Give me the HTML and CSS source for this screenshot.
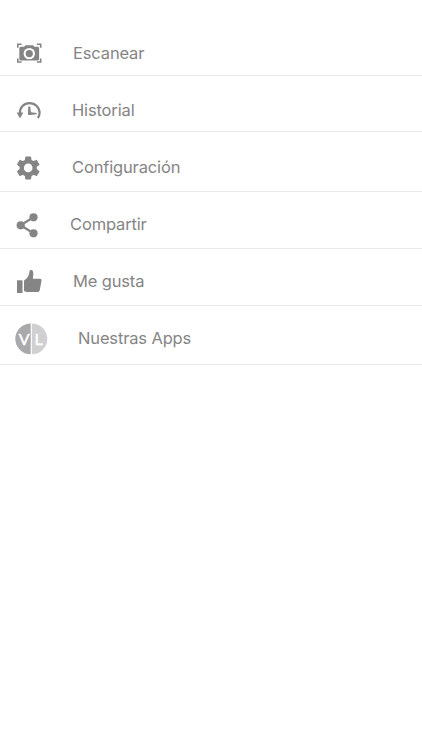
FILE: index.html
```html
<!DOCTYPE html>
<html lang="es">
<head>
    <meta charset="UTF-8">
    <meta name="viewport" content="width=device-width, initial-scale=1.0">
    <title>Menú</title>
    <link rel="stylesheet" href="styles.css">
</head>
<body>
    <ul class="menu">
        <li class="item scan">
            <svg class="icon" viewBox="0 0 36 36">
                <path class="line frame" d="M5.800 11.800V8.300h3.800M24.900 8.300h3.800V11.800M5.800 22.500v3.500h3.800M24.900 26h3.800V22.500"/>
                <path fill-rule="evenodd" d="M9 10.700h3.200l1.300-1.500h7.600l1.300 1.500h3.200q1.500 0 1.500 1.500v10.800q0 1.500-1.500 1.500H9q-1.700 0-1.700-1.500V12.200q0-1.500 1.700-1.500zM17.300 11.900a5.700 5.700 0 1 0 0 11.400 5.700 5.700 0 1 0 0-11.400zm0 2.100a3.600 3.600 0 1 1 0 7.200 3.600 3.600 0 1 1 0-7.200z"/>
            </svg>
            <span class="label">Escanear</span>
        </li>
        <li class="item history">
            <svg class="icon" viewBox="0 0 36 36">
                <path class="line" d="M7.800 21C7.600 14.300 12 10.200 17.600 10.200c5.700 0 10 4.300 10 9.600 0 2-.6 3.800-1.700 5.200"/>
                <path d="M16.200 13.500h1.900l.9 5.700 5.700.8v1.200l-6.500.8h-2.200z"/>
                <path d="M4.700 19.500h6.600L8 25.500z"/>
            </svg>
            <span class="label">Historial</span>
        </li>
        <li class="item settings">
            <svg class="icon" viewBox="0 0 36 36">
                <path transform="translate(1.800 3.500) scale(1.2)" d="M19.140 12.940c.04-.3.06-.61.06-.94 0-.32-.02-.64-.07-.94l2.030-1.580c.18-.14.23-.41.12-.61l-1.920-3.320c-.12-.22-.37-.29-.59-.22l-2.390.96c-.5-.38-1.030-.7-1.620-.94l-.36-2.540c-.04-.24-.24-.41-.48-.41h-3.840c-.24 0-.43.17-.47.41l-.36 2.540c-.59.24-1.130.57-1.620.94l-2.390-.96c-.22-.08-.47 0-.59.22L2.740 8.870c-.12.21-.08.47.12.61l2.030 1.580c-.05.3-.09.63-.09.94s.02.64.07.94l-2.030 1.580c-.18.14-.23.41-.12.61l1.920 3.320c.12.22.37.29.59.22l2.390-.96c.5.38 1.030.7 1.620.94l.36 2.540c.05.24.24.41.48.41h3.840c.24 0 .44-.17.47-.41l.36-2.540c.59-.24 1.130-.56 1.620-.94l2.390.96c.22.08.47 0 .59-.22l1.920-3.320c.12-.22.07-.47-.12-.61l-2.010-1.580zM12 15.600c-1.980 0-3.600-1.620-3.600-3.600s1.620-3.600 3.600-3.600 3.600 1.620 3.600 3.600-1.620 3.600-3.600 3.600z"/>
            </svg>
            <span class="label">Configuración</span>
        </li>
        <li class="item share">
            <svg class="icon" viewBox="0 0 36 36">
                <path class="line" d="M21.500 10.300l-13 8 13 8"/>
                <circle cx="21.500" cy="10.300" r="4.100"/>
                <circle cx="8.700" cy="18.300" r="4.100"/>
                <circle cx="21.500" cy="26.300" r="4.100"/>
            </svg>
            <span class="label">Compartir</span>
        </li>
        <li class="item like">
            <svg class="icon" viewBox="0 0 36 36">
                <path d="M5 16.300h5.500v12.700H5z"/>
                <path d="M12 16.500c3-2 4.500-4 5-6.500l.5-2.600c.3-1.200 1-1.600 2-1.300 1.700.5 2 2.400 1.800 4.400L20.800 14.800H28c1.200 0 1.700.8 1.500 2l-1.700 9.200c-.3 1.500-1.200 2-2.500 2H16c-1.600 0-2.600-.3-4-1z"/>
            </svg>
            <span class="label">Me gusta</span>
        </li>
        <li class="item apps">
            <svg class="icon" viewBox="0 0 36 36">
                <path class="logo-left" d="M18.700 2.400a15.400 15.400 0 0 0 0 30.800z"/>
                <path class="logo-right" d="M19.900 2.400a15.400 15.400 0 0 1 0 30.800z"/>
                <text class="logo-text" x="12.200" y="23.600">V</text>
                <text class="logo-text" x="26.600" y="23.600">L</text>
            </svg>
            <span class="label">Nuestras Apps</span>
        </li>
    </ul>
</body>
</html>
```
FILE: styles.css
```css
body {
    margin: 0;
    background: #fff;
    font-family: Inter, Roboto, sans-serif;
}
.menu {
    list-style: none;
    margin: 0;
    padding: 36px 0 0;
}
.item {
    display: flex;
    align-items: flex-start;
    height: 36px;
    padding: 15px 0 5px 12px;
    border-bottom: 1px solid #e9e9e9;
}
.icon {
    width: 36px;
    height: 36px;
    fill: #858585;
}
.line {
    fill: none;
    stroke: #858585;
    stroke-width: 2.2;
}
.frame {
    stroke-width: 1.6;
}
.label {
    margin-left: 24px;
    color: #858585;
    font-size: 16.5px;
    line-height: 34px;
    letter-spacing: -0.15px;
}
.scan {
    padding-top: 0;
    padding-bottom: 3px;
}
.scan .label,
.like .label {
    margin-left: 25px;
}
.history {
    padding-top: 17px;
    padding-bottom: 2px;
}
.settings {
    padding-top: 18px;
}
.share .label {
    margin-left: 22px;
}
.apps {
    padding-bottom: 7px;
}
.apps .label {
    margin-left: 30px;
}
.logo-left {
    fill: #a9a9ab;
}
.logo-right {
    fill: #d0d0d2;
}
.logo-text {
    fill: #fff;
    stroke: #fff;
    stroke-width: 0.4;
    font-family: Lato, sans-serif;
    font-size: 16px;
    text-anchor: middle;
}
```
